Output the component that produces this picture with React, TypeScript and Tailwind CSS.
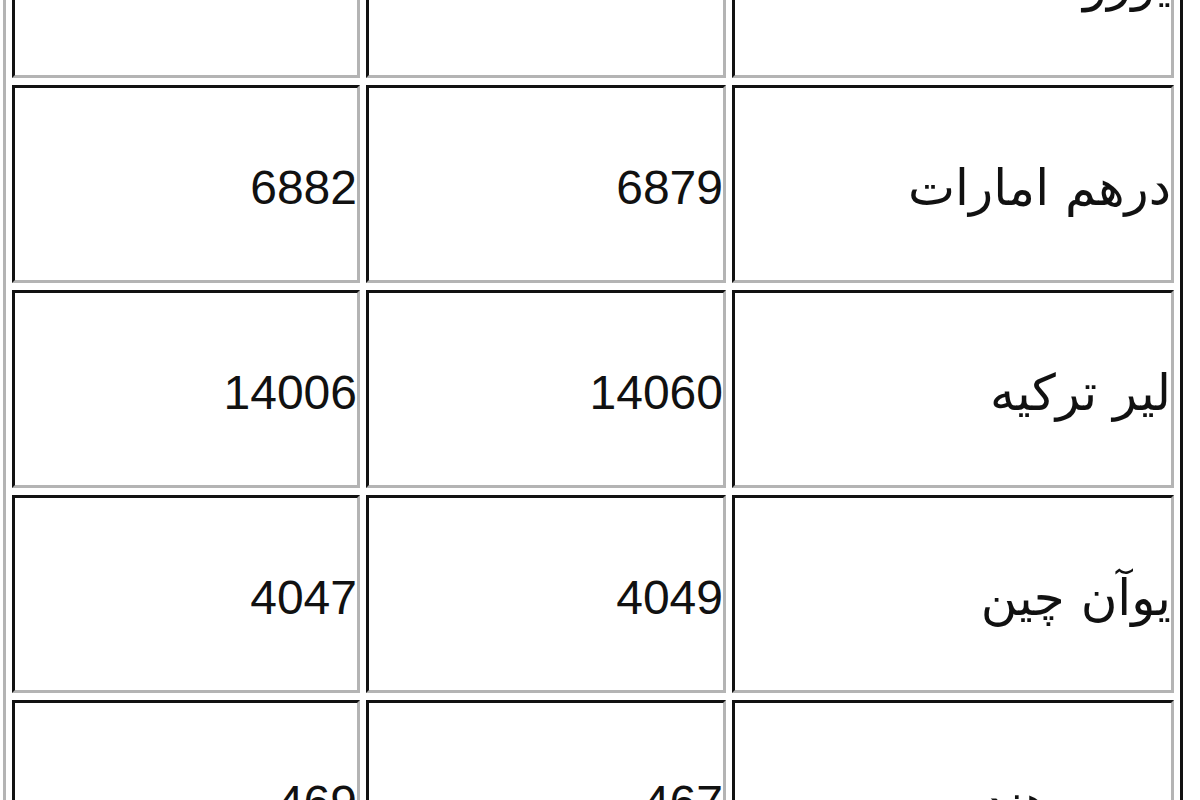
const rows = [
  { name: "یورو", buy: "15070", sell: "15080" },
  { name: "درهم امارات", buy: "6879", sell: "6882" },
  { name: "لیر ترکیه", buy: "14060", sell: "14006" },
  { name: "یوآن چین", buy: "4049", sell: "4047" },
  { name: "روپیه هند", buy: "467", sell: "469" },
];

function Cell({ children, w }: { children: React.ReactNode; w: string }) {
  return (
    <td
      className={`${w} h-[198px] p-0 pt-[8px] text-right align-middle border-[3px] border-t-[#111] border-l-[#111] border-r-[#b4b4b4] border-b-[#b4b4b4]`}
    >
      {children}
    </td>
  );
}

export default function App() {
  return (
    <div
      className="w-[1200px] h-[800px] overflow-hidden bg-white text-[48px] leading-none text-[#111]"
      style={{ fontFamily: '"Liberation Sans", "DejaVu Sans", sans-serif' }}
    >
      <table className="table-fixed w-[1180px] ml-[3px] mt-[-130px] border-separate border-spacing-x-[6px] border-spacing-y-[7px] border-[3px] border-t-[#b4b4b4] border-l-[#b4b4b4] border-r-[#111] border-b-[#111]">
        <tbody>
          {rows.map((r) => (
            <tr key={r.name}>
              <Cell w="w-[348px]">{r.sell}</Cell>
              <Cell w="w-[360px]">{r.buy}</Cell>
              <Cell w="w-[442px]">
                <span dir="rtl" style={{ fontFamily: '"DejaVu Sans", sans-serif' }} className="text-[50px]">
                  {r.name}
                </span>
              </Cell>
            </tr>
          ))}
        </tbody>
      </table>
    </div>
  );
}
